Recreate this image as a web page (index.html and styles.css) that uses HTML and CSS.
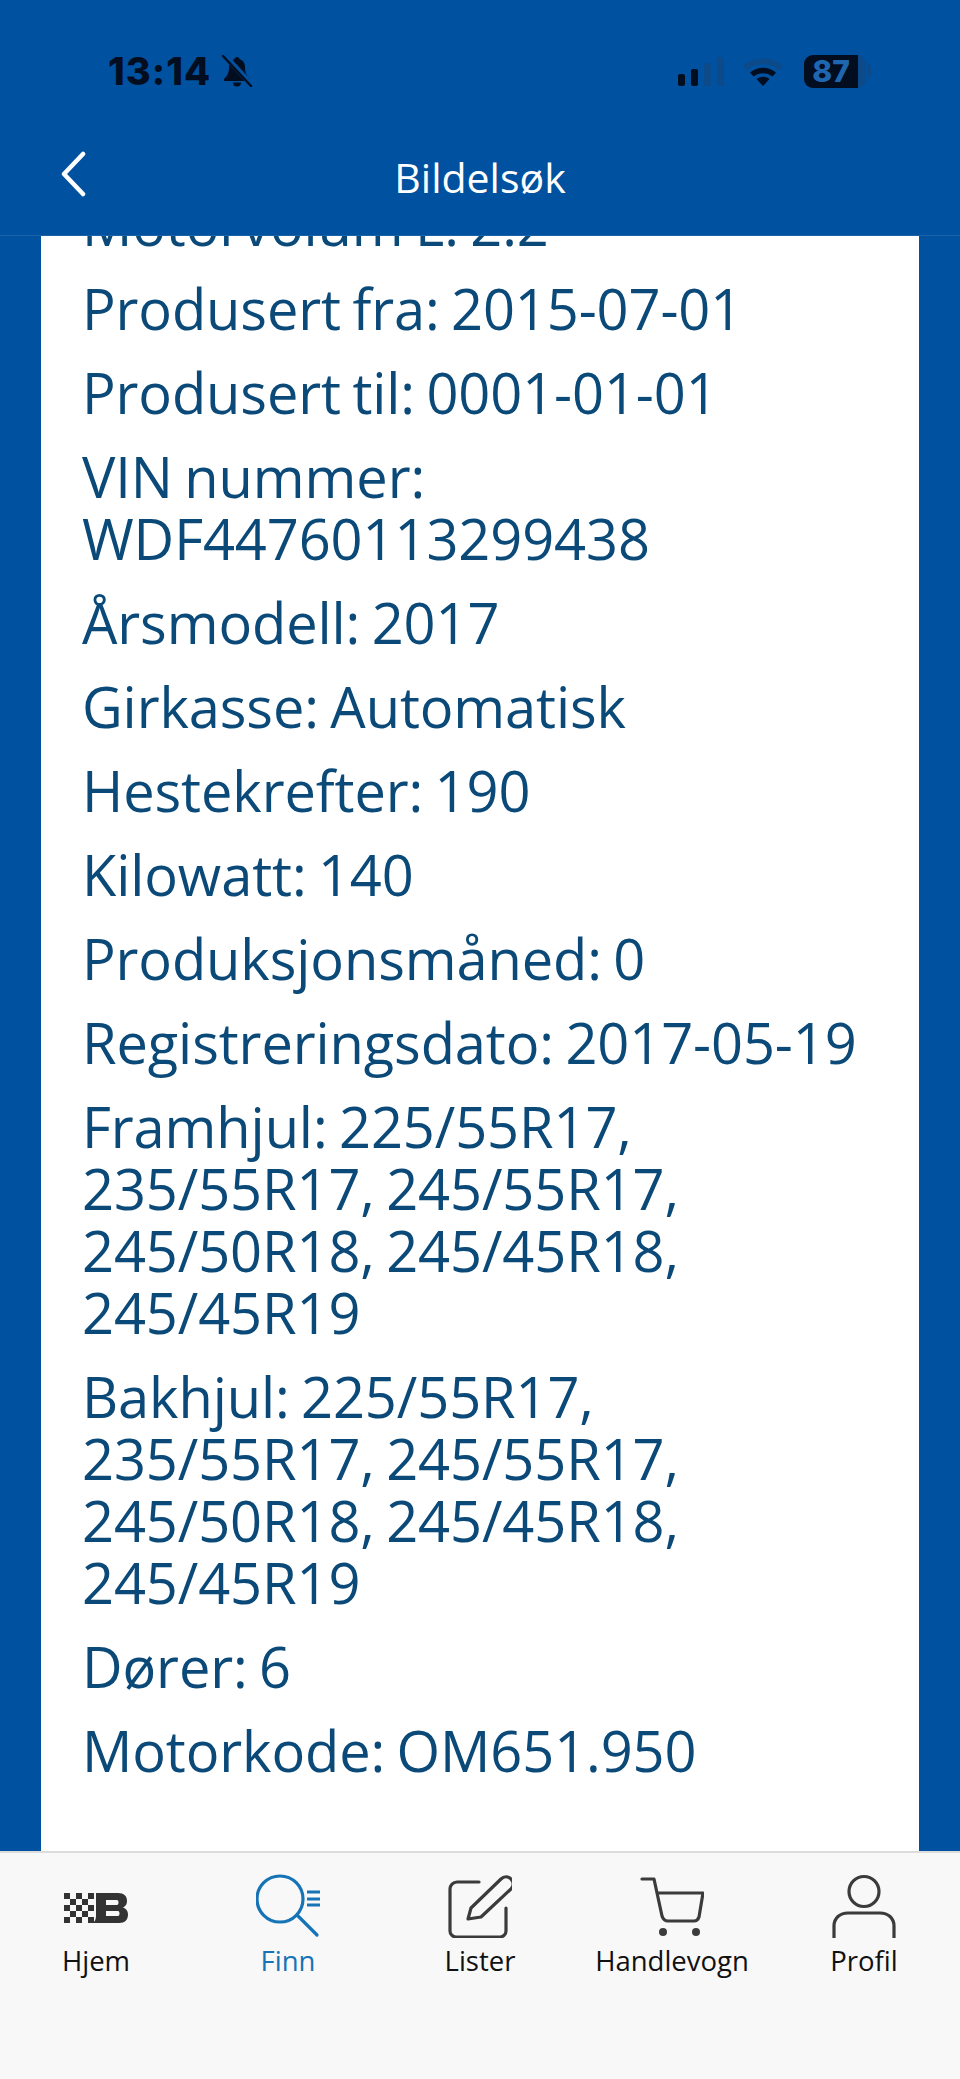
FILE: index.html
```html
<!DOCTYPE html>
<html lang="no">
<head>
<meta charset="utf-8">
<title>Bildelsøk</title>
<link rel="stylesheet" href="styles.css">
</head>
<body>
<div class="app">
  <header class="top">
    <div class="status">
      <div class="status-left">
        <span class="clock">13:14</span>
        <svg class="bell" viewBox="0 0 32 32" width="32" height="32"><path d="M16 2c-1.500 0-2.500 1-2.700 2.300C9.500 5.500 8 8.500 8 12.500c0 5-1.500 8-5 11.500v2h26v-2c-3.500-3.500-5-6.500-5-11.500 0-4-1.500-7-5.300-8.200C18.500 3 17.500 2 16 2zM12 27.500a4 4 0 0 0 8 0z" fill="#020d20"/><path d="M4 1l26 28" stroke="#00519f" stroke-width="5.500"/><path d="M2 1l28 30" stroke="#020d20" stroke-width="2.400" stroke-linecap="round"/></svg>
      </div>
      <div class="status-right">
        <svg class="signal" viewBox="0 0 48 32" width="48" height="32"><rect x="1" y="19" width="7" height="12" rx="2" fill="#020d20"/><rect x="14" y="14" width="7" height="17" rx="2" fill="#020d20"/><rect x="27" y="8" width="7" height="23" rx="2" fill="#0c4a89"/><rect x="40" y="2" width="7" height="29" rx="2" fill="#0c4a89"/></svg>
        <svg class="wifi" viewBox="0 0 42 30" width="42" height="30"><path d="M1 10c11-10 29-10 40 0l-3.500 4c-9.500-8-23.500-8-33 0z" fill="#0c4a89"/><path d="M8 16.500c7.500-6.500 18.500-6.500 26 0l-3.500 4c-5.500-4.500-13.500-4.500-19 0z" fill="#020d20"/><path d="M14.500 23c4-3 9-3 13 0L21 30z" fill="#020d20"/></svg>
        <div class="battery"><div class="battery-body"><span class="battery-fill">87</span></div><span class="battery-cap"></span></div>
      </div>
    </div>
    <div class="titlebar">
      <svg class="back" viewBox="0 0 30 48" width="30" height="48"><path d="M27 4L8 24l19 20" fill="none" stroke="#fff" stroke-width="4.500" stroke-linecap="round" stroke-linejoin="round"/></svg>
      <h1 class="title">Bildelsøk</h1>
    </div>
  </header>
  <main class="content">
    <div class="card">
      <p>Motorvolum L: 2.2</p>
      <p>Produsert fra: 2015-07-01</p>
      <p>Produsert til: 0001-01-01</p>
      <p>VIN nummer:<br>WDF44760113299438</p>
      <p>Årsmodell: 2017</p>
      <p>Girkasse: Automatisk</p>
      <p>Hestekrefter: 190</p>
      <p>Kilowatt: 140</p>
      <p>Produksjonsmåned: 0</p>
      <p>Registreringsdato: 2017-05-19</p>
      <p>Framhjul: 225/55R17,<br>235/55R17, 245/55R17,<br>245/50R18, 245/45R18,<br>245/45R19</p>
      <p>Bakhjul: 225/55R17,<br>235/55R17, 245/55R17,<br>245/50R18, 245/45R18,<br>245/45R19</p>
      <p>Dører: 6</p>
      <p>Motorkode: OM651.950</p>
    </div>
  </main>
  <nav class="tabs">
    <a class="tab">
      <svg class="icon" viewBox="0 0 64 64" width="64" height="64"><g fill="#333"><path d="M33 14h22c6 0 9 3 9 8 0 3-1 5-4 6.500 3 1 5 3.500 5 7 0 5-3 8.500-9 8.500H30c2-2 3-4 3-7zM43 21v5h11c2 0 2-5 0-5zM43 32v5h12c2 0 2-5 0-5z" fill-rule="evenodd" transform="translate(-1 5)"/><path d="M0 19h6v6H0zM12 19h6v6h-6zM24 19h6v6h-6zM6 25h6v6H6zM18 25h6v6h-6zM0 31h6v6H0zM12 31h6v6h-6zM24 31h6v6h-6zM6 37h6v6H6zM18 37h6v6h-6zM0 43h6v6H0zM12 43h6v6h-6zM24 43h6v6h-6z"/></g></svg>
      <span class="tab-label">Hjem</span>
    </a>
    <a class="tab tab-active">
      <svg class="icon" viewBox="0 0 64 64" width="64" height="64"><g fill="none" stroke="#1573b6" stroke-width="3.200"><circle cx="24" cy="25" r="23"/><path d="M41 41l20 20" stroke-linecap="round"/><path d="M51 18h13M51 25h13M51 31h13"/></g></svg>
      <span class="tab-label">Finn</span>
    </a>
    <a class="tab">
      <svg class="icon" viewBox="0 0 64 64" width="64" height="64"><g fill="none" stroke="#3b3b3b" stroke-width="3.200" stroke-linecap="round" stroke-linejoin="round"><path d="M31 8H9a7 7 0 0 0-7 7v42a6 6 0 0 0 6 6h44a6 6 0 0 0 6-6V34"/><path d="M20 45l3-11L53 5c3-3 7-3 10 0s3 7 0 10L33 43z"/></g></svg>
      <span class="tab-label">Lister</span>
    </a>
    <a class="tab">
      <svg class="icon" viewBox="0 0 64 64" width="64" height="64"><g fill="none" stroke="#3b3b3b" stroke-width="3.200" stroke-linecap="round" stroke-linejoin="round"><path d="M2 5h12l8 37c1 3 3 5 6 5h26c2 0 4-1 5-4l4-24H17"/></g><circle cx="23" cy="58" r="4" fill="#3b3b3b"/><circle cx="56" cy="58" r="4" fill="#3b3b3b"/></svg>
      <span class="tab-label">Handlevogn</span>
    </a>
    <a class="tab">
      <svg class="icon" viewBox="0 0 64 64" width="64" height="64"><g fill="none" stroke="#3b3b3b" stroke-width="3.200"><circle cx="32" cy="17.500" r="15"/><path d="M2 64V52c0-8 6-13 14-13h32c8 0 14 5 14 13v12"/></g></svg>
      <span class="tab-label">Profil</span>
    </a>
  </nav>
</div>
</body>
</html>
```
FILE: styles.css
```css
* { box-sizing: border-box; }
html, body { margin: 0; padding: 0; }
body { font-family: "Open Sans", "Noto Sans", sans-serif; background: #00519f; }
.app { width: 960px; height: 2079px; display: flex; flex-direction: column; overflow: hidden; }
.top { height: 236px; flex: none; background: #00519f; border-bottom: 1px solid #1a63a9; display: flex; flex-direction: column; }
.status { height: 140px; padding: 51px 89px 0 108px; display: flex; justify-content: space-between; align-items: flex-start; }
.status-left { display: flex; align-items: center; gap: 10px; height: 40px; }
.clock { font-family: Inter, sans-serif; font-weight: 800; font-size: 38px; color: #020d20; letter-spacing: 1px; }
.status-right { display: flex; align-items: center; gap: 17px; height: 40px; }
.battery { display: flex; align-items: center; margin-left: 3px; }
.battery-body { width: 62px; height: 33px; border-radius: 9px; background: #0c4a89; }
.battery-fill { display: block; width: 54px; height: 33px; border-radius: 9px 0 0 9px; background: #020d20; color: #1e66b0; font-family: Inter, sans-serif; font-weight: 800; font-size: 30px; line-height: 33px; text-align: center; }
.battery-cap { width: 4px; height: 14px; background: #0c4a89; border-radius: 0 4px 4px 0; margin-left: 1px; }
.titlebar { flex: 1; position: relative; display: flex; align-items: center; justify-content: center; padding-bottom: 22px; }
.back { position: absolute; left: 56px; top: 10px; }
.title { margin: 0; font-size: 41px; font-weight: 400; color: #fff; }
.content { flex: 1; min-height: 0; overflow: hidden; padding: 0 41px; }
.card { background: #fff; margin-top: -43px; padding: 0 41px; height: 1700px; color: #0b4a78; font-size: 56px; line-height: 62px; letter-spacing: -0.1px; word-spacing: -3px; }
.card p { margin: 0 0 22px; }
.tabs { height: 228px; flex: none; background: #f8f8f8; border-top: 2px solid #dcdcdc; display: flex; padding: 21px 0 0; }
.tab { flex: 1; display: flex; flex-direction: column; align-items: center; color: #111; font-size: 27.500px; }
.tab-active { color: #1573b6; }
.tab-label { margin-top: 3px; line-height: 40px; }
```
